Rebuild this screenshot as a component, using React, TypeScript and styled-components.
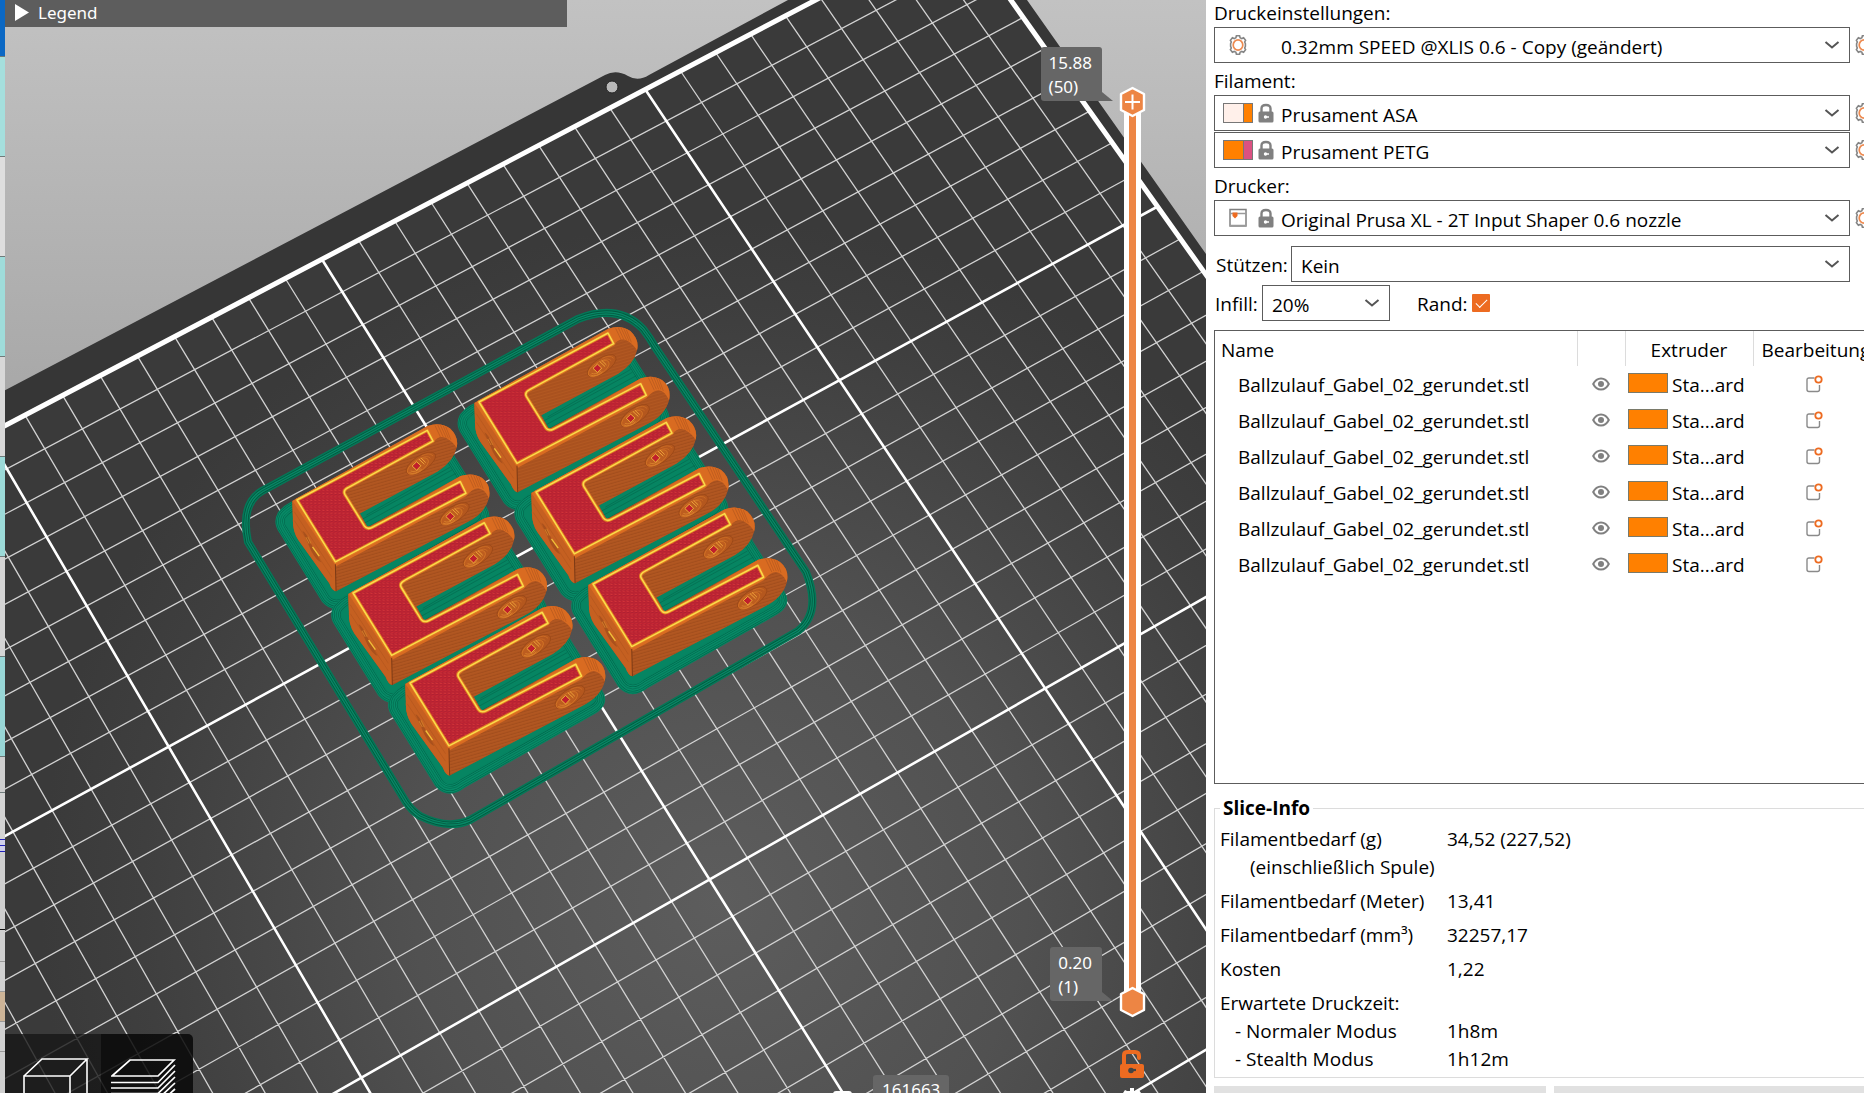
import React from 'react';
import styled, { createGlobalStyle } from 'styled-components';

const GlobalStyle = createGlobalStyle`
  * { box-sizing: border-box; }
  body { margin: 0; overflow: hidden; background: #fff; }
  body, select, button, input, table { font-family: "Open Sans", "Noto Sans", sans-serif; }
`;

/* ---------- geometry of the print bed ---------- */

type Pt = [number, number];

// Bed cell coordinates and where the camera shows them.
const anchors: { bed: Pt; view: Pt }[] = [
  { bed: [18, 0], view: [322, 260] },
  { bed: [27, 0], view: [646, 89] },
  { bed: [27, 9], view: [839, 379] },
  { bed: [36, 9], view: [1157, 207] },
  { bed: [9, 9], view: [168, 747] },
  { bed: [9, 18], view: [362, 1077] },
  { bed: [18, 18], view: [709, 880] },
  { bed: [27, 18], view: [1046, 689] },
];

function solve(m: number[][], r: number[]): number[] {
  const n = r.length;
  const a = m.map((row, i) => [...row, r[i]]);
  for (let c = 0; c < n; c++) {
    let p = c;
    for (let i = c + 1; i < n; i++) if (Math.abs(a[i][c]) > Math.abs(a[p][c])) p = i;
    [a[c], a[p]] = [a[p], a[c]];
    for (let i = 0; i < n; i++) {
      if (i === c) continue;
      const k = a[i][c] / a[c][c];
      for (let j = c; j <= n; j++) a[i][j] -= k * a[c][j];
    }
  }
  return a.map((row, i) => row[n] / row[i]);
}

// Least-squares camera projection through the anchors.
const camera = (() => {
  const rows: number[][] = [];
  const rhs: number[] = [];
  anchors.forEach(({ bed, view }) => {
    const u = bed[0] / 18, v = bed[1] / 18, x = view[0] / 1000, y = view[1] / 1000;
    rows.push([u, v, 1, 0, 0, 0, -u * x, -v * x]); rhs.push(x);
    rows.push([0, 0, 0, u, v, 1, -u * y, -v * y]); rhs.push(y);
  });
  const ata = Array.from({ length: 8 }, (_, i) =>
    Array.from({ length: 8 }, (_, j) => rows.reduce((s, r) => s + r[i] * r[j], 0)));
  const atb = Array.from({ length: 8 }, (_, i) => rows.reduce((s, r, k) => s + r[i] * rhs[k], 0));
  return solve(ata, atb);
})();

function project(bu: number, bv: number): Pt {
  const u = bu / 18, v = bv / 18, h = camera;
  const w = h[6] * u + h[7] * v + 1;
  return [(1000 * (h[0] * u + h[1] * v + h[2])) / w, (1000 * (h[3] * u + h[4] * v + h[5])) / w];
}

const segment = (a: Pt, b: Pt) => {
  const p = project(...a), q = project(...b);
  return `M${p[0].toFixed(1)} ${p[1].toFixed(1)}L${q[0].toFixed(1)} ${q[1].toFixed(1)}`;
};

const steps = Array.from({ length: 37 }, (_, i) => i);
const gridPath = (keep: (i: number) => boolean) =>
  steps.filter(keep).map(i => segment([i, 0], [i, 36]) + segment([0, i], [36, i])).join('');
const minorGrid = gridPath(i => i % 9 !== 0);
const majorGrid = gridPath(i => i % 9 === 0 && i > 0 && i < 36);
const bedEdge = segment([0, 0], [36, 0]) + segment([36, 0], [36, 36]);

/* ---------- sliced parts ---------- */

const parts = [
  { x: 479, y: 402, s: 1 },
  { x: 536, y: 492, s: 1.01 },
  { x: 593, y: 584, s: 1.02 },
  { x: 297, y: 500, s: 1.01 },
  { x: 353, y: 593, s: 1.018 },
  { x: 410, y: 683, s: 1.025 },
];

const brimPath =
  'M74 350Q100 320 130 318L540 150Q568 160 574 184L668 334Q686 362 652 382L272 598Q232 630 204 598L78 394Q62 372 74 350Z';
const bodyPath =
  'M104 308L506 85Q542 72 572 92Q600 118 592 150Q584 190 536 220L305 345L328 386L604 234Q640 222 668 240Q696 262 688 300Q676 346 622 372L234 576Q222 574 214 552L122 424Q104 396 106 360Z';
const topPath =
  'M118 305L505 98L522 130L270 268Q254 276 260 288L318 382Q326 394 342 386L603 250L620 285L232 489Z';
const skirtPath =
  'M262 491L578 319Q618 303 643 329Q650 338 655 347L806 572Q822 612 798 631L470 820Q448 830 420 816Q412 811 406 802L248 542Q240 504 262 491Z';

function Hole({ x, y }: { x: number; y: number }) {
  return (
    <g transform={`translate(${x} ${y}) rotate(-34)`} fill="none">
      <ellipse rx="50" ry="22" fill="#b4571e" stroke="#974617" strokeWidth="2" />
      <ellipse cx="-12" cy="2" rx="36" ry="17" fill="#bd5d1f" stroke="#d97a28" strokeWidth="2" />
      <path d="M-44 4Q-34 20 -8 16M-38 2Q-30 14 -10 12" stroke="#e08a30" strokeWidth="2" />
      <path d="M14 -17Q40 -14 42 2M10 -12Q30 -10 32 4" stroke="#cf7026" strokeWidth="2" />
      <path d="M-26 -8L-8 -11L-4 6L-22 10Z" fill="#c11f2c" stroke="#f0b93a" strokeWidth="2.5" />
      <path d="M2 -14L7 8M9 -14L13 6" stroke="#f0a63a" strokeWidth="2.5" />
    </g>
  );
}

function Fork() {
  return (
    <>
      <path d={bodyPath} fill="#ae5520" />
      <path d={bodyPath} fill="url(#layers)" />
      <path d="M104 308L232 492L234 576Q222 574 214 552L122 424Q104 396 106 360Z" fill="#c56021" />
      <path d="M110 340L222 512M110 366L222 534" stroke="#b3561e" strokeWidth="2" fill="none" />
      <path d="M104 308L506 85Q542 72 572 92Q600 118 592 150Q580 130 560 120Q540 112 523 132L505 96L118 305L232 490L620 285L603 250L342 388Q326 396 317 382L328 392L604 234Q640 222 668 240Q696 262 688 300Q676 272 656 270Q640 270 620 294L234 502Z" fill="#d96b21" />
      <path d="M528 84L546 122M536 82L553 119M544 82L561 120M552 84L568 122M560 88L575 126M626 232L644 270M634 230L650 267M642 230L657 267M650 232L664 268M658 236L671 272" stroke="#b4571e" strokeWidth="2" />
      <path d="M232 496L234 576" stroke="#7d3b16" strokeWidth="3" />
      <path d="M134 396Q146 402 158 432L190 490Q176 486 160 456Z" fill="#a9511d" />
      <path d="M144 416L154 434M150 414L160 434" stroke="#cf7a28" strokeWidth="3" />
      <path d="M164 444L184 472" stroke="#f0c03a" strokeWidth="4" />
      <path d={topPath} fill="#cc2733" />
      <path d={topPath} fill="url(#infill)" stroke="#e07a24" strokeWidth="10" strokeLinejoin="round" />
      <path d={topPath} fill="none" stroke="#fbdc4a" strokeWidth="4.5" strokeLinejoin="round" />
      <Hole x={486} y={196} />
      <Hole x={586} y={346} />
    </>
  );
}

const Canvas = styled.svg`
  position: absolute;
  inset: 0;
  width: 100%;
  height: 100%;
  display: block;
`;

function BedScene() {
  const place = (p: { x: number; y: number; s: number }) =>
    `translate(${p.x} ${p.y}) scale(${p.s / 3}) translate(-118 -305)`;
  return (
    <Canvas viewBox="5 0 1201 1093" preserveAspectRatio="xMinYMin slice" role="img" aria-label="Druckbett">
      <defs>
        <linearGradient id="sky" x1="0" y1="0" x2="0" y2="1">
          <stop offset="0" stopColor="#c2c2c2" />
          <stop offset="0.36" stopColor="#a8a8a8" />
          <stop offset="1" stopColor="#707070" />
        </linearGradient>
        <radialGradient id="shine" gradientUnits="userSpaceOnUse" cx="720" cy="900" r="680">
          <stop offset="0" stopColor="#5d5d5d" />
          <stop offset="0.45" stopColor="#515151" />
          <stop offset="0.85" stopColor="#3f3f3f" />
          <stop offset="1" stopColor="#3a3a3a" />
        </radialGradient>
        <pattern id="infill" width="12" height="10" patternUnits="userSpaceOnUse">
          <path d="M0 2L6 4L12 2M0 7L4 9L12 7" stroke="#9c1b30" strokeWidth="1.8" fill="none" />
          <path d="M1 5L7 6" stroke="#e2453f" strokeWidth="1.4" />
        </pattern>
        <pattern id="layers" width="40" height="9" patternUnits="userSpaceOnUse" patternTransform="rotate(-16)">
          <path d="M0 3H40" stroke="#9d4a1a" strokeWidth="2" />
          <path d="M0 7H40" stroke="#b85c24" strokeWidth="1.5" />
        </pattern>
      </defs>
      <rect x="5" width="1202" height="1093" fill="url(#sky)" />
      <path d="M0 393L605 75Q616 69 628 76Q638 82 649 75L788 0H1027L1220 274V1100H0Z" fill="#363636" />
      <path
        d={`M${project(0, 0)}L${project(36, 0)}L${project(36, 36)}L${project(0, 36)}Z`}
        fill="url(#shine)"
      />
      <circle cx="612" cy="87" r="6" fill="#b9b9b9" stroke="#252525" />
      <path d={minorGrid} stroke="#d2d2d2" strokeWidth="1.3" />
      <path d={majorGrid} stroke="#fff" strokeWidth="2.6" />
      <path d={bedEdge} stroke="#fff" strokeWidth="5" />

      <path d={skirtPath} fill="none" stroke="#047858" strokeWidth="8" />
      <path d={skirtPath} fill="none" stroke="#03573f" strokeWidth="5" />
      <path d={skirtPath} fill="none" stroke="#088865" strokeWidth="3.4" />
      <path d={skirtPath} fill="none" stroke="#03573f" strokeWidth="0.8" />

      {parts.map(p => (
        <g key={`brim-${p.x}`} transform={place(p)} strokeLinejoin="round">
          <path d={brimPath} fill="#068562" stroke="#068562" strokeWidth="30" />
          {[24, 14].map(w => (
            <React.Fragment key={w}>
              <path d={brimPath} fill="none" stroke="#04634a" strokeWidth={w} />
              <path d={brimPath} fill="none" stroke="#078b67" strokeWidth={w - 3} />
            </React.Fragment>
          ))}
          <path d={brimPath} fill="none" stroke="#04634a" strokeWidth="1.6" />
          <path d="M318 374L590 226M312 362L578 216M330 384L600 240M324 350L572 208" stroke="#04634a" strokeWidth="1.6" />
        </g>
      ))}
      {parts.map(p => <g key={`part-${p.x}`} transform={place(p)}><Fork /></g>)}
    </Canvas>
  );
}

/* ---------- 3D view ---------- */

const Window = styled.main`
  display: grid;
  grid-template-columns: 5px minmax(0, 1fr) 658px;
  height: 100vh;
  overflow: hidden;
`;

const Backdrop = styled.div`
  display: flex;
  flex-direction: column;
  overflow: hidden;
`;

const Strip = styled.div<{ $h: number; $c: string; $line?: string }>`
  flex: none;
  height: ${p => p.$h}px;
  background: ${p => p.$c};
  border-bottom: 1px solid ${p => p.$line ?? '#6f7b7b'};
`;

const Viewer = styled.section`
  position: relative;
  overflow: hidden;
`;

const Legend = styled.button`
  position: absolute;
  top: 0;
  left: 0;
  width: 562px;
  height: 27px;
  display: flex;
  align-items: center;
  gap: 9px;
  padding: 0 0 2px 10px;
  border: 0;
  background: #5d5d5d;
  color: #fff;
  font: 17px/24px "Noto Sans", sans-serif;
`;

const ViewSwitch = styled.div`
  position: absolute;
  left: 0;
  bottom: 0;
  display: flex;
  height: 59px;
  border-radius: 0 5px 0 0;
  overflow: hidden;
`;

const ViewButton = styled.button<{ $active?: boolean }>`
  width: ${p => (p.$active ? 92 : 96)}px;
  height: 100px;
  padding: 18px 0 0 ${p => (p.$active ? 10 : 18)}px;
  border: 0;
  text-align: left;
  background: ${p => (p.$active ? 'rgba(8,8,8,.86)' : 'rgba(22,22,22,.8)')};
`;

const LayerSlider = styled.div`
  position: absolute;
  top: 101px;
  right: 65px;
  width: 17px;
  height: 901px;
  padding: 0 5px;
  background: #fff;
  display: flex;
  justify-content: center;
`;

const Range = styled.div`
  width: 7px;
  background: #ed8544;
`;

const Knob = styled.svg<{ $bottom?: boolean }>`
  position: absolute;
  left: -6px;
  ${p => (p.$bottom ? 'bottom: -16px' : 'top: -15px')};
`;

const RangeInput = styled.input`
  position: absolute;
  inset: 0;
  width: 17px;
  height: 100%;
  margin: 0;
  opacity: 0;
  writing-mode: vertical-lr;
`;

const Tip = styled.output<{ $top: number }>`
  position: absolute;
  top: ${p => p.$top}px;
  right: 104px;
  padding: 4px 10px 2px 8px;
  border-radius: 3px 3px 0 3px;
  background: #666;
  color: #fff;
  font: 17px/24px "Noto Sans", sans-serif;
  white-space: pre;

  &::after {
    content: "";
    position: absolute;
    left: 100%;
    bottom: 0;
    border-left: 11px solid #666;
    border-top: 9px solid transparent;
  }
`;

const MoveTip = styled.output`
  position: absolute;
  top: 1075px;
  left: 868px;
  padding: 3px 9px;
  border-radius: 3px;
  background: #666;
  color: #fff;
  font: 17px/24px "Noto Sans", sans-serif;
`;

const OverlayButton = styled.button<{ $top: number; $left: number }>`
  position: absolute;
  top: ${p => p.$top}px;
  left: ${p => p.$left}px;
  padding: 0;
  border: 0;
  background: none;
  line-height: 0;
`;

const Hexagon = ({ plus }: { plus?: boolean }) => (
  <>
    <path d="M14.5 2L26 8V24L14.5 30L3 24V8Z" fill="#ed8544" stroke="#fff" strokeWidth="2.4" strokeLinejoin="round" />
    {plus && <path d="M14.5 8.5V23.5M7 16H22" stroke="#fff" strokeWidth="2" />}
  </>
);

/* ---------- settings panel ---------- */

const Panel = styled.aside`
  display: flex;
  flex-direction: column;
  padding-left: 8px;
  overflow: hidden;
  background: #fff;
  color: #000;
  font-size: 19px;
  line-height: 28px;
`;

const FieldLabel = styled.label`
  display: block;
  height: 27px;
  line-height: 26px;
  margin-top: 5px;
  flex: none;
  &:first-child { margin-top: 0; }
`;

const Line = styled.div<{ $gap?: number }>`
  display: flex;
  align-items: center;
  flex: none;
  margin-top: ${p => p.$gap ?? 0}px;
`;

const SelectBox = styled.div<{ $w?: number }>`
  position: relative;
  height: 36px;
  ${p => (p.$w ? `width: ${p.$w}px;` : 'flex: 1;')}
`;

const Select = styled.select<{ $indent: number }>`
  appearance: none;
  width: 100%;
  height: 36px;
  padding: 3px 40px 0 ${p => p.$indent}px;
  border: 1px solid #5c5c5c;
  border-radius: 0;
  background: #fff;
  color: #000;
  font-size: 19px;
  line-height: 28px;
`;

const Chevron = styled.svg`
  position: absolute;
  right: 10px;
  top: 13px;
  pointer-events: none;
`;

const Badges = styled.span`
  position: absolute;
  left: 9px;
  top: 8px;
  display: flex;
  gap: 5px;
  pointer-events: none;
`;

const Slot = styled.span`
  width: 30px;
  height: 20px;
  display: flex;
  justify-content: center;
`;

const Colors = styled.span<{ $a: string; $b: string }>`
  width: 30px;
  height: 20px;
  border: 1px solid #777;
  background: linear-gradient(90deg, ${p => p.$a} 0 19px, #777 19px 20px, ${p => p.$b} 20px);
`;

const GearButton = styled.button`
  flex: none;
  width: 14px;
  height: 36px;
  padding: 0 0 0 4px;
  border: 0;
  background: none;
  overflow: hidden;
  line-height: 0;
`;

const InlineLabel = styled.label<{ $w: number; $pad: number }>`
  width: ${p => p.$w}px;
  padding: 2px 0 0 ${p => p.$pad}px;
  white-space: nowrap;
`;

const Check = styled.input`
  appearance: none;
  position: relative;
  width: 18px;
  height: 18px;
  margin: 0;
  background: #ed6b21;
  border-radius: 1px;

  &::after {
    content: "";
    position: absolute;
    left: 4px;
    top: 5px;
    width: 10px;
    height: 5px;
    border-left: 1px solid #fff;
    border-bottom: 1px solid #fff;
    transform: rotate(-45deg);
  }
`;

const ObjectList = styled.div`
  flex: none;
  height: 454px;
  margin-top: 9px;
  border: 1px solid #5c5c5c;
  border-right: 0;
  overflow: hidden;
`;

const Table = styled.table`
  width: 100%;
  table-layout: fixed;
  border-collapse: collapse;

  th {
    height: 35px;
    padding: 2px 0 0;
    font-weight: 400;
    white-space: nowrap;
    border-right: 1px solid #dcdcdc;
    text-align: center;
  }
  th:first-child { text-align: left; padding-left: 6px; }
  th:last-child { text-align: left; padding-left: 8px; border: 0; }
  td { height: 36px; padding: 2px 0 0; line-height: 28px; white-space: nowrap; }
  td:first-child { padding-left: 23px; }
  td:last-child { padding-left: 53px; }
`;

const IconButton = styled.button`
  display: block;
  margin: 0 auto;
  padding: 0 0 3px;
  border: 0;
  background: none;
  line-height: 0;
`;

const EditButton = styled(IconButton)`
  margin: 0;
`;

const Extruder = styled.div`
  display: flex;
  align-items: center;
  gap: 4px;
  padding-left: 3px;
`;

const Swatch = styled.span`
  width: 40px;
  height: 20px;
  margin-bottom: 4px;
  border: 1px solid #7a7a6a;
  background: #ff8000;
`;

const SliceInfo = styled.fieldset`
  flex: none;
  height: 284px;
  min-width: 0;
  margin: 10px 0 0;
  padding: 3px 0 0 5px;
  border: 1px solid #dcdcdc;
  border-right: 0;

  legend { padding: 0 3px; line-height: 28px; font-weight: 700; font-size: 19px; }
`;

const Facts = styled.dl`
  margin: 0;
  display: grid;
  grid-template-columns: 227px 1fr;
  dt, dd { margin: 0; line-height: 28px; }
`;

const Fact = styled.dt<{ $indent?: number; $tight?: boolean }>`
  && { padding-left: ${p => p.$indent ?? 0}px; margin-top: ${p => (p.$tight ? 0 : 6)}px; white-space: nowrap; }
`;

const Value = styled.dd<{ $tight?: boolean }>`
  && { margin-top: ${p => (p.$tight ? 0 : 6)}px; }
`;

const Actions = styled.div`
  display: flex;
  flex: none;
  gap: 8px;
  margin-top: 8px;
`;

const Action = styled.button<{ $w?: number }>`
  height: 44px;
  border: 0;
  background: #e1e1e1;
  ${p => (p.$w ? `width: ${p.$w}px;` : 'flex: 1;')}
`;

const Gear = () => (
  <svg width="20" height="20" viewBox="0 0 20 20" fill="none">
    <path
      d="M8.4 .8h3.2l.5 2 1.700.8 1.800-.8 2 2.500-.9 1.700.7 1.600v2.800l-.7 1.600.9 1.700-2 2.500-1.800-.8-1.700.8-.5 2H8.400l-.5-2-1.700-.8-1.800.8-2-2.500.9-1.700-.7-1.600v-2.800l.7-1.600-.9-1.700 2-2.500 1.800.8 1.700-.8z"
      stroke="#858585" strokeWidth="1.600"
    />
    <ellipse cx="10" cy="10" rx="4.800" ry="5.200" stroke="#ed8a50" strokeWidth="1.700" />
  </svg>
);

const Lock = () => (
  <svg width="16" height="20" viewBox="0 0 16 20">
    <path d="M3.500 9V5.500Q3.500 2 8 2T12.500 5.500V9" fill="none" stroke="#808080" strokeWidth="2.400" />
    <rect x="0.500" y="8.500" width="15" height="11" rx="1.500" fill="#808080" />
    <circle cx="7.500" cy="14" r="1.700" fill="#fff" />
    <path d="M8 14H11" stroke="#fff" strokeWidth="1.500" />
  </svg>
);

const PrinterIcon = () => (
  <svg width="18" height="20" viewBox="0 0 18 20" fill="none">
    <rect x="1" y="1.500" width="16" height="16.500" stroke="#808080" strokeWidth="1.500" />
    <path d="M1 5.500H17M1 17.500H17" stroke="#9a9a9a" strokeWidth="1.500" />
    <path d="M3.500 4.500H8.500V8L6 10.500L3.500 8Z" fill="#ed6b21" />
  </svg>
);

const Eye = () => (
  <svg width="18" height="14" viewBox="0 0 18 14" fill="none">
    <path d="M1.200 7Q4 1.500 9 1.500T16.800 7Q14 12.500 9 12.500T1.200 7Z" stroke="#808080" strokeWidth="2" />
    <circle cx="9" cy="7" r="3" fill="#808080" />
  </svg>
);

const Edit = () => (
  <svg width="17" height="18" viewBox="0 0 17 18" fill="none">
    <path d="M8.500 3H3Q1 3 1 5V14.500Q1 16.500 3 16.500H11.500Q13.500 16.500 13.500 14.500V10" stroke="#8a8a8a" strokeWidth="1.400" />
    <circle cx="12.500" cy="4.500" r="3.200" stroke="#ed6b21" strokeWidth="1.800" />
  </svg>
);

interface ComboProps {
  id: string;
  value: string;
  indent?: number;
  width?: number;
  children?: React.ReactNode;
}

function Combo({ id, value, indent = 9, width, children }: ComboProps) {
  return (
    <SelectBox $w={width}>
      <Select id={id} $indent={indent} defaultValue={value}>
        <option>{value}</option>
      </Select>
      {children && <Badges>{children}</Badges>}
      <Chevron width="16" height="10" viewBox="0 0 16 10">
        <path d="M1.500 2L8 7.500L14.500 2" fill="none" stroke="#555" strokeWidth="2" />
      </Chevron>
    </SelectBox>
  );
}

const Settings = ({ label }: { label: string }) => (
  <GearButton aria-label={label}><Gear /></GearButton>
);

const strips: { h: number; c: string; line?: string }[] = [
  { h: 57, c: '#0b68c4' }, { h: 100, c: '#a5dfdd' }, { h: 100, c: '#dedede' }, { h: 100, c: '#9fdcda' },
  { h: 100, c: '#d8d8d8' }, { h: 100, c: '#9cdad8' }, { h: 100, c: '#d4d4d4' }, { h: 100, c: '#98d6d6' },
  { h: 36, c: '#cfcfcf' }, { h: 47, c: '#d4d4d4', line: '#2222bb' }, { h: 6, c: '#d0d0ea', line: '#2222bb' },
  { h: 6, c: '#d0d0ea', line: '#2222bb' }, { h: 78, c: '#cfcfcf', line: '#111' }, { h: 32, c: '#cfcfcf', line: '#999' },
  { h: 30, c: '#d0d0d0', line: '#999' }, { h: 30, c: '#cdb497', line: '#999' }, { h: 30, c: '#d0d0d0', line: '#999' },
  { h: 60, c: '#cfcfcf' },
];

const objects = Array.from({ length: 6 }, () => 'Ballzulauf_Gabel_02_gerundet.stl');

export default function App() {
  return (
    <>
      <GlobalStyle />
      <Window>
        <Backdrop>
          {strips.map((s, i) => <Strip key={i} $h={s.h} $c={s.c} $line={s.line} />)}
        </Backdrop>

        <Viewer>
          <BedScene />
          <Legend>
            <svg width="14" height="17" viewBox="0 0 14 17"><path d="M0 0L14 8.500L0 17Z" fill="#fff" /></svg>
            Legend
          </Legend>

          <Tip $top={47}>{'15.88\n(50)'}</Tip>
          <Tip $top={947}>{'0.20\n(1)'}</Tip>
          <LayerSlider>
            <Range />
            <Knob width="29" height="32" viewBox="0 0 29 32"><Hexagon plus /></Knob>
            <Knob $bottom width="29" height="32" viewBox="0 0 29 32"><Hexagon /></Knob>
            <RangeInput type="range" min={1} max={50} defaultValue={50} aria-label="Schicht" />
          </LayerSlider>

          <OverlayButton $top={1049} $left={1114} aria-label="Schloss">
            <svg width="26" height="30" viewBox="0 0 26 30">
              <path d="M5 15V6Q5 3 9 3H16Q20 3 20 7V9" fill="none" stroke="#ed6b21" strokeWidth="4" strokeLinecap="round" />
              <rect x="1" y="15" width="24" height="14" rx="2" fill="#ed6b21" />
              <path d="M13 21H17" stroke="#444" strokeWidth="2.200" />
              <circle cx="12" cy="21.500" r="2.800" fill="#444" />
            </svg>
          </OverlayButton>
          <OverlayButton $top={1088} $left={1117} aria-label="Einstellungen">
            <svg width="20" height="20" viewBox="0 0 20 20">
              <path d="M8 0H12V3H15L17 2L19 5V20H1V5L3 2L5 3H8Z" fill="#fff" />
            </svg>
          </OverlayButton>
          <OverlayButton $top={1091} $left={828} aria-label="Bewegung">
            <svg width="20" height="20" viewBox="0 0 20 20"><rect width="19" height="20" rx="3" fill="#fff" /></svg>
          </OverlayButton>
          <MoveTip>161663</MoveTip>

          <ViewSwitch>
            <ViewButton aria-label="3D-Ansicht">
              <svg width="66" height="70" viewBox="0 0 66 70" fill="none" stroke="#fff" strokeWidth="1.600">
                <path d="M1 20H47V64H1ZM1 20L19 3H64L47 20M64 3V50L47 64" />
              </svg>
            </ViewButton>
            <ViewButton $active aria-label="Vorschau">
              <svg width="66" height="70" viewBox="0 0 66 70" fill="none" stroke="#fff" strokeWidth="1.700">
                <path d="M1 20L19 4H63L47 20Z" />
                <path d="M0 26.500H47L64 9M0 32H47L64 15M0 37.500H47L64 21M0 43H47L64 27M0 48.500H47L64 33M0 54H47L64 39" />
              </svg>
            </ViewButton>
          </ViewSwitch>
        </Viewer>

        <Panel>
          <FieldLabel htmlFor="print">Druckeinstellungen:</FieldLabel>
          <Line>
            <Combo id="print" indent={66} value="0.32mm SPEED @XLIS 0.6 - Copy (geändert)"><Slot><Gear /></Slot></Combo>
            <Settings label="Druckeinstellungen bearbeiten" />
          </Line>
          <FieldLabel htmlFor="filament-1">Filament:</FieldLabel>
          <Line>
            <Combo id="filament-1" indent={66} value="Prusament ASA"><Colors $a="#fff0ea" $b="#ff8000" /><Lock /></Combo>
            <Settings label="Filament 1 bearbeiten" />
          </Line>
          <Line $gap={1}>
            <Combo id="filament-2" indent={66} value="Prusament PETG"><Colors $a="#ff8000" $b="#db5182" /><Lock /></Combo>
            <Settings label="Filament 2 bearbeiten" />
          </Line>
          <FieldLabel htmlFor="printer">Drucker:</FieldLabel>
          <Line>
            <Combo id="printer" indent={66} value="Original Prusa XL - 2T Input Shaper 0.6 nozzle"><Slot><PrinterIcon /></Slot><Lock /></Combo>
            <Settings label="Drucker bearbeiten" />
          </Line>
          <Line $gap={10}>
            <InlineLabel htmlFor="supports" $w={77} $pad={2}>Stützen:</InlineLabel>
            <Combo id="supports" value="Kein" />
            <GearButton as="span" />
          </Line>
          <Line $gap={3}>
            <InlineLabel htmlFor="infill" $w={48} $pad={1}>Infill:</InlineLabel>
            <Combo id="infill" width={128} value="20%" />
            <InlineLabel htmlFor="brim" $w={82} $pad={27}>Rand:</InlineLabel>
            <Check id="brim" type="checkbox" defaultChecked />
          </Line>

          <ObjectList>
            <Table>
              <colgroup><col width="362" /><col width="48" /><col width="128" /><col /></colgroup>
              <thead>
                <tr><th>Name</th><th /><th>Extruder</th><th>Bearbeitung</th></tr>
              </thead>
              <tbody>
                {objects.map((name, i) => (
                  <tr key={i}>
                    <td>{name}</td>
                    <td><IconButton aria-label="Sichtbar"><Eye /></IconButton></td>
                    <td><Extruder><Swatch />Sta...ard</Extruder></td>
                    <td><EditButton aria-label="Bearbeiten"><Edit /></EditButton></td>
                  </tr>
                ))}
              </tbody>
            </Table>
          </ObjectList>

          <SliceInfo>
            <legend>Slice-Info</legend>
            <Facts>
              <Fact $tight>Filamentbedarf (g)</Fact><Value $tight>34,52 (227,52)</Value>
              <Fact $tight $indent={30}>(einschließlich Spule)</Fact><Value $tight />
              <Fact>Filamentbedarf (Meter)</Fact><Value>13,41</Value>
              <Fact>Filamentbedarf (mm³)</Fact><Value>32257,17</Value>
              <Fact>Kosten</Fact><Value>1,22</Value>
              <Fact>Erwartete Druckzeit:</Fact><Value />
              <Fact $tight $indent={15}>- Normaler Modus</Fact><Value $tight>1h8m</Value>
              <Fact $tight $indent={15}>- Stealth Modus</Fact><Value $tight>1h12m</Value>
            </Facts>
          </SliceInfo>
          <Actions>
            <Action $w={332} aria-label="Jetzt slicen" />
            <Action aria-label="Exportieren" />
          </Actions>
        </Panel>
      </Window>
    </>
  );
}
